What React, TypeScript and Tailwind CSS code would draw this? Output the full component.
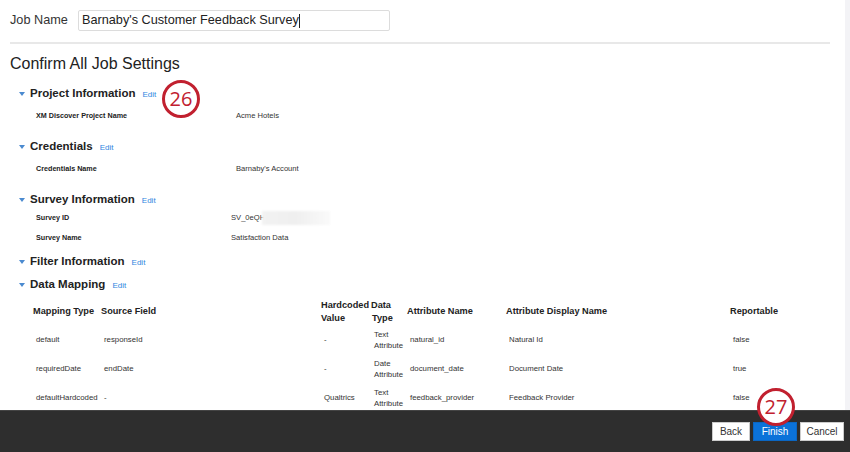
import React from "react";

const SANS = { fontFamily: '"Liberation Sans", Arial, sans-serif' } as React.CSSProperties;

const Caret: React.FC = () => (
  <svg width="6" height="4" viewBox="0 0 6 4" className="mr-[5px] mt-[1px] shrink-0">
    <path d="M0 0 L6 0 L3 4 Z" fill="#4a8ad0" />
  </svg>
);

const SectionHeader: React.FC<{ title: string; className?: string }> = ({ title, className }) => (
  <div className={`flex items-center pl-[19px] h-[16px] whitespace-nowrap ${className ?? ""}`}>
    <Caret />
    <span className="text-[11.5px] font-bold text-[#222] leading-[16px]">{title}</span>
    <span className="ml-[7px] mt-[3px] text-[8px] text-[#2f86e0] leading-[12px]">Edit</span>
  </div>
);

const InfoRow: React.FC<{ label: string; value: React.ReactNode; valueX: number; className?: string }> = ({
  label,
  value,
  valueX,
  className,
}) => (
  <div className={`flex h-[12px] items-center leading-[12px] whitespace-nowrap ${className ?? ""}`}>
    <span className={`pl-[36px] text-[7.2px] font-bold text-[#222] ${valueX === 236 ? "w-[236px]" : "w-[231px]"}`}>
      {label}
    </span>
    <span className="text-[7.6px] text-[#333]">{value}</span>
  </div>
);

const Callout: React.FC<{ n: string; className?: string }> = ({ n, className }) => (
  <div
    className={`absolute w-[38px] h-[38px] rounded-full border-[3px] border-[#c1202f] bg-white flex items-center justify-center text-[20px] text-[#c1202f] ${className ?? ""}`}
    style={{ fontFamily: '"Open Sans", "Liberation Sans", sans-serif' }}
  >
    {n}
  </div>
);

const rows = [
  ["default", "responseId", "-", ["Text", "Attribute"], "natural_id", "Natural Id", "false"],
  ["requiredDate", "endDate", "-", ["Date", "Attribute"], "document_date", "Document Date", "true"],
  ["defaultHardcoded", "-", "Qualtrics", ["Text", "Attribute"], "feedback_provider", "Feedback Provider", "false"],
] as const;

const cols = "grid grid-cols-[68px_220px_50px_36px_99px_224px_1fr]";

export default function App() {
  return (
    <div className="relative w-[850px] h-[452px] bg-white overflow-hidden flex flex-col" style={SANS}>
      <div className="flex-1 flex min-h-0">
        <div className="flex-1 overflow-hidden">
          <div className="flex items-center pt-[10px] pl-[10px] whitespace-nowrap">
            <span className="w-[68px] shrink-0 text-[12.7px] text-[#333] leading-[21px]">Job Name</span>
            <div className="w-[312px] h-[21px] border border-[#dcdcdc] rounded-[2px] flex items-center pl-[3px] text-[12.7px] text-[#222]">
              Barnaby's Customer Feedback Survey
              <span className="w-px h-[14px] bg-[#222]" />
            </div>
          </div>
          <div className="mt-[11px] ml-[10px] w-[820px] h-[2px] bg-[#e8e8e8]" />
          <h1 className="mt-[9px] pl-[10px] text-[16px] leading-[22px] text-[#222]">Confirm All Job Settings</h1>

          <SectionHeader title="Project Information" className="mt-[10px]" />
          <InfoRow label="XM Discover Project Name" value="Acme Hotels" valueX={236} className="mt-[9px]" />

          <SectionHeader title="Credentials" className="mt-[16px]" />
          <InfoRow label="Credentials Name" value="Barnaby's Account" valueX={236} className="mt-[9px]" />

          <SectionHeader title="Survey Information" className="mt-[16px]" />
          <InfoRow
            label="Survey ID"
            valueX={231}
            className="mt-[5px]"
            value={
              <span className="flex items-center">
                SV_0eQH
                <span className="ml-[-3px] w-[68px] h-[14px] bg-gradient-to-r from-[#f2f2f2] via-[#efefef] to-[#fafafa] blur-[1px]" />
              </span>
            }
          />
          <InfoRow label="Survey Name" value="Satisfaction Data" valueX={231} className="mt-[8px]" />

          <SectionHeader title="Filter Information" className="mt-[9px]" />
          <SectionHeader title="Data Mapping" className="mt-[7px]" />

          <div
            className={`${cols} mt-[6px] pl-[33px] text-[9.2px] font-bold text-[#222] leading-[13px] items-center h-[27px] whitespace-nowrap`}
          >
            <span>Mapping Type</span>
            <span>Source Field</span>
            <span>
              Hardcoded
              <br />
              Value
            </span>
            <span>
              Data
              <br />
              <span className="pl-[1px]">Type</span>
            </span>
            <span>Attribute Name</span>
            <span>Attribute Display Name</span>
            <span>Reportable</span>
          </div>
          {rows.map((r, i) => (
            <div key={i} className={`${cols} pl-[36px] h-[29px] items-center text-[7.8px] text-[#333] whitespace-nowrap`}>
              <span>{r[0]}</span>
              <span>{r[1]}</span>
              <span>{r[2]}</span>
              <span className="leading-[11px] -ml-[0px]">
                {r[3][0]}
                <br />
                {r[3][1]}
              </span>
              <span>{r[4]}</span>
              <span>{r[5]}</span>
              <span>{r[6]}</span>
            </div>
          ))}
        </div>
        <div className="w-[5px] bg-[#f3f3f6]" />
      </div>

      <div className="h-[42px] bg-[#2e2e2e] border-t border-[#444] flex items-center justify-end pr-[6px] gap-[3px]">
        <button className="w-[38px] h-[19px] bg-white border border-[#ccc] text-[10px] text-[#333]">Back</button>
        <button className="w-[44px] h-[19px] bg-[#0b72d9] border border-[#0b66c2] text-[10px] text-white">Finish</button>
        <button className="w-[44px] h-[19px] bg-white border border-[#ccc] text-[10px] text-[#333]">Cancel</button>
      </div>

      <Callout n="26" className="left-[162px] top-[80px]" />
      <Callout n="27" className="left-[757px] top-[388px]" />
    </div>
  );
}
